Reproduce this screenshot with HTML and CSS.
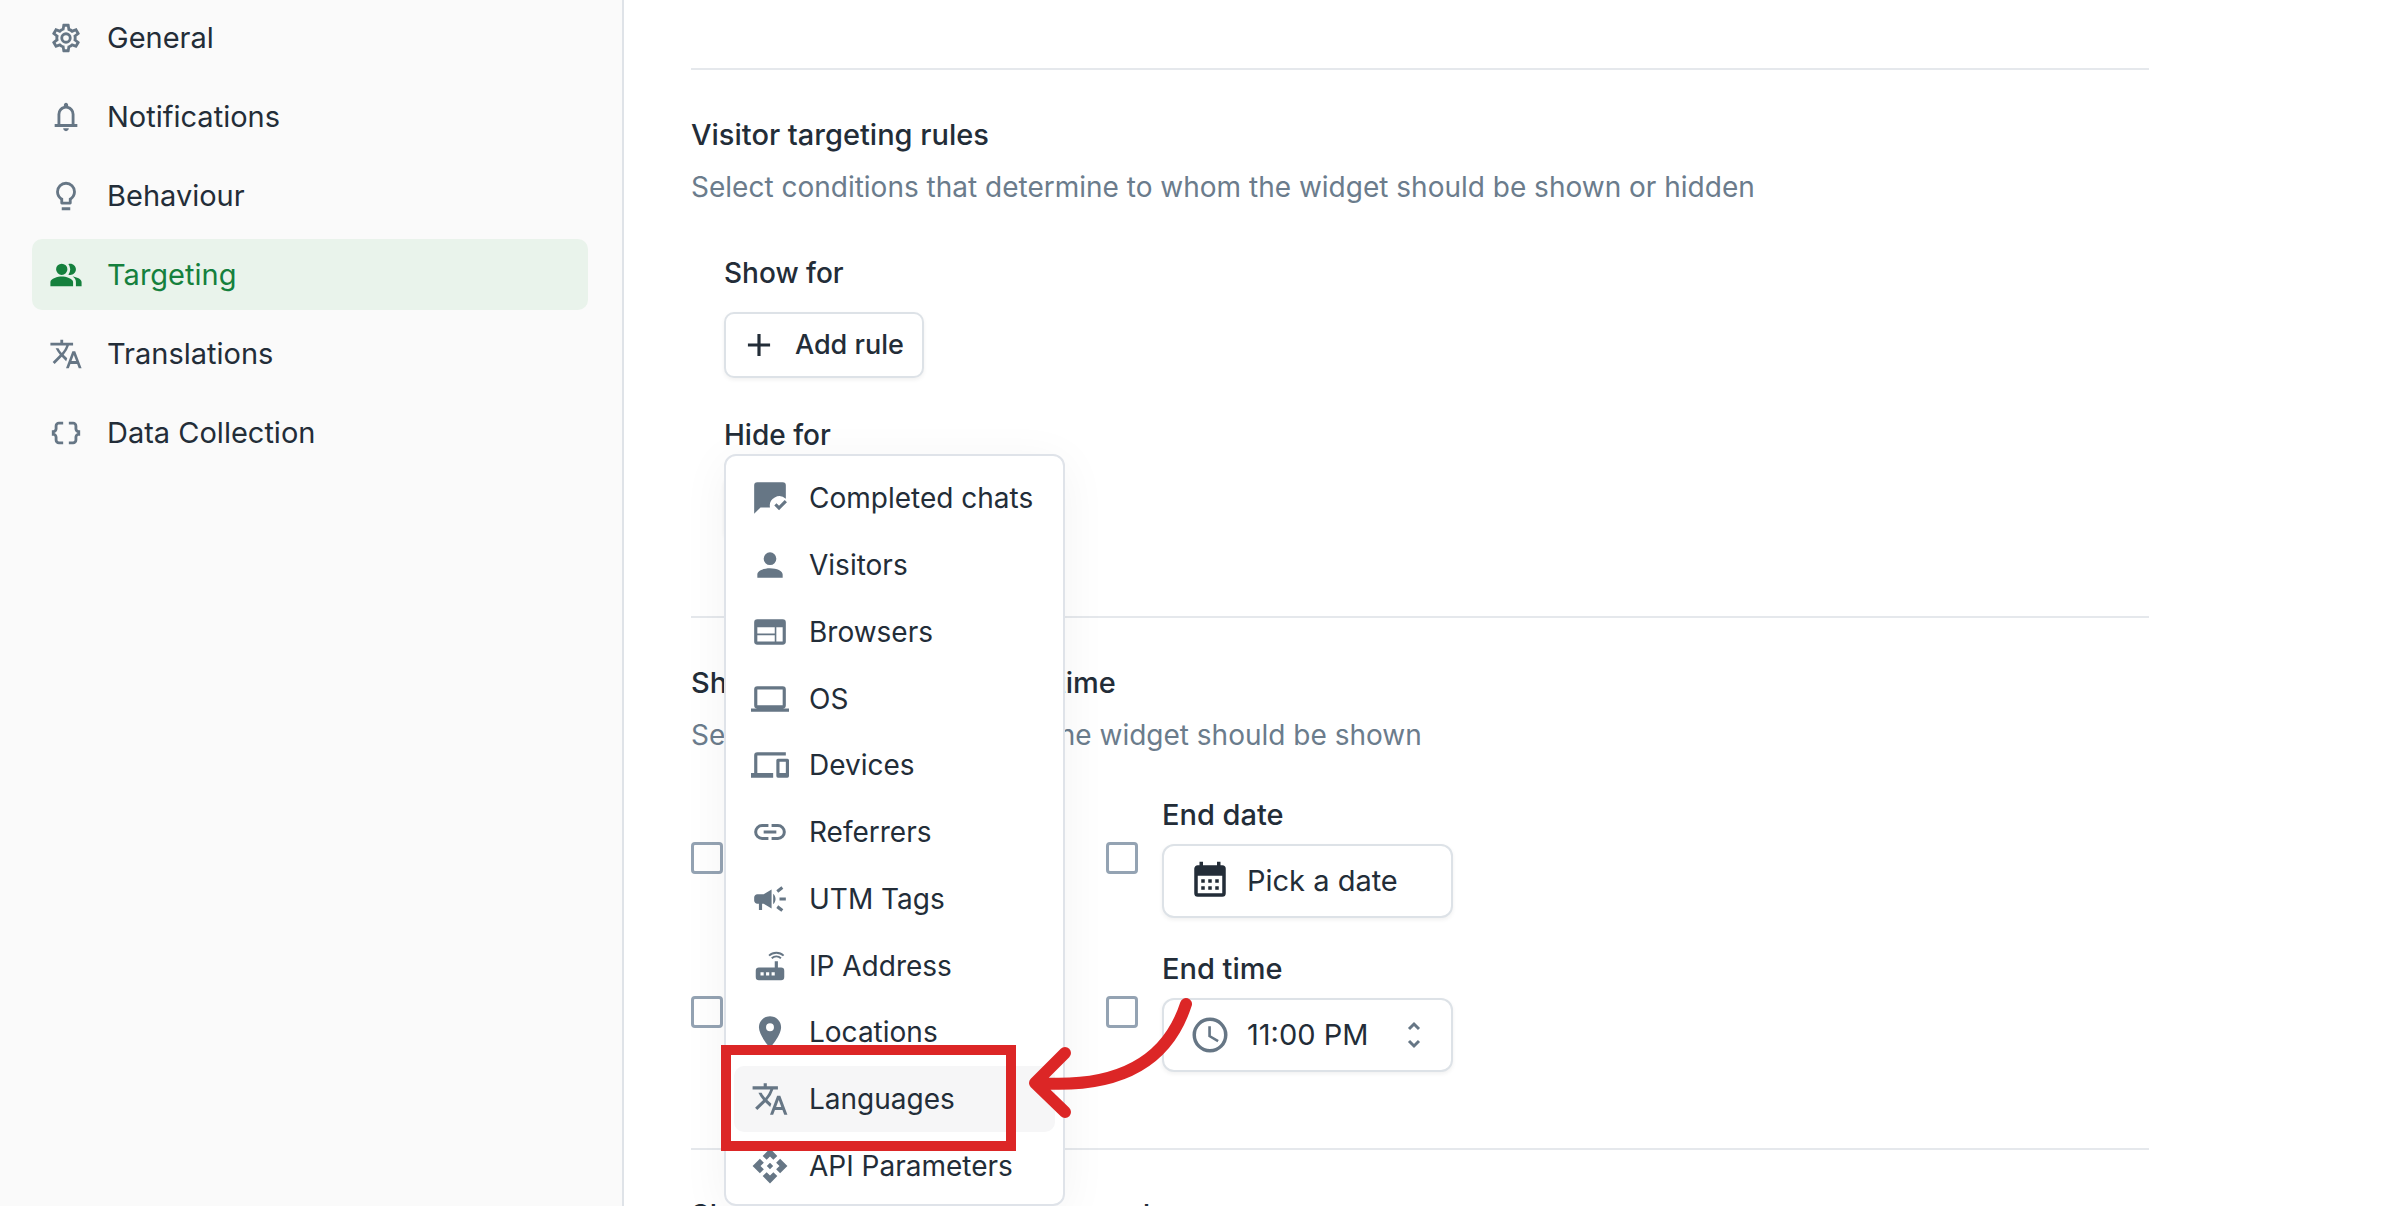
FILE: index.html
```html
<!DOCTYPE html>
<html lang="en">
  <head>
    <meta charset="UTF-8" />
    <meta name="viewport" content="width=device-width, initial-scale=1.0" />
    <title>Widget targeting</title>
    <link rel="stylesheet" href="styles.css">
  </head>
  <body>
    <nav class="sidebar">
      <a href="#general"><svg class="icon" viewBox="0 0 24 24"><path d="M12 8a4 4 0 0 1 4 4 4 4 0 0 1-4 4 4 4 0 0 1-4-4 4 4 0 0 1 4-4m0 2a2 2 0 0 0-2 2 2 2 0 0 0 2 2 2 2 0 0 0 2-2 2 2 0 0 0-2-2m-2 12c-.25 0-.46-.18-.5-.42l-.37-2.65c-.63-.25-1.17-.59-1.69-.99l-2.49 1.01c-.22.08-.49 0-.61-.22l-2-3.46a.493.493 0 0 1 .12-.64l2.11-1.66L4.5 12l.07-1-2.11-1.63a.493.493 0 0 1-.12-.64l2-3.46c.12-.22.39-.31.61-.22l2.49 1c.52-.39 1.06-.73 1.69-.98l.37-2.65c.04-.24.25-.42.5-.42h4c.25 0 .46.18.5.42l.37 2.65c.63.25 1.17.59 1.69.98l2.49-1c.22-.09.49 0 .61.22l2 3.46c.13.22.07.49-.12.64L19.43 11l.07 1-.07 1 2.11 1.63c.19.15.25.42.12.64l-2 3.46c-.12.22-.39.31-.61.22l-2.49-1c-.52.39-1.06.73-1.69.98l-.37 2.65c-.04.24-.25.42-.5.42h-4m1.25-18-.37 2.61c-1.2.25-2.26.89-3.03 1.78L5.44 7.35l-.75 1.3L6.8 10.2a5.55 5.55 0 0 0 0 3.6l-2.12 1.56.75 1.3 2.43-1.04c.77.88 1.82 1.52 3.01 1.76l.37 2.62h1.52l.37-2.61c1.19-.25 2.24-.89 3.01-1.77l2.43 1.04.75-1.3-2.12-1.55c.4-1.17.4-2.44 0-3.61l2.11-1.55-.75-1.3-2.41 1.04a5.42 5.42 0 0 0-3.03-1.77L12.75 4h-1.5Z"/></svg>General</a>
      <a href="#notifications"><svg class="icon" viewBox="0 -960 960 960"><path d="M160-200v-80h80v-280q0-83 50-147.500T420-792v-28q0-25 17.500-42.500T480-880t42.500 17.500T540-820v28q80 20 130 84.500T720-560v280h80v80H160Zm320 120q-33 0-56.500-23.500T400-160h160q0 33-23.500 56.500T480-80ZM320-280h320v-280q0-66-47-113t-113-47q-66 0-113 47t-47 113v280Z"/></svg>Notifications</a>
      <a href="#behaviour"><svg class="icon" viewBox="0 0 24 24"><path d="M12 2a7 7 0 0 1 7 7c0 2.380-1.190 4.470-3 5.740V17a1 1 0 0 1-1 1H9a1 1 0 0 1-1-1v-2.260C6.190 13.470 5 11.380 5 9a7 7 0 0 1 7-7M9 22v-2h6v2H9m3-18a5 5 0 0 0-5 5c0 2.050 1.230 3.810 3 4.580V16h4v-2.420c1.770-.77 3-2.530 3-4.580a5 5 0 0 0-5-5Z"/></svg>Behaviour</a>
      <a href="#targeting" class="active"><svg class="icon" viewBox="0 0 24 24"><path d="M16.670 13.130C18.040 14.060 19 15.320 19 17v3h4v-3c0-2.180-3.570-3.470-6.330-3.870ZM15 12c2.210 0 4-1.790 4-4s-1.790-4-4-4c-.47 0-.91.1-1.330.24a5.980 5.980 0 0 1 0 7.520c.42.14.86.24 1.330.24ZM9 4a4 4 0 1 1 0 8 4 4 0 0 1 0-8m0 9c-2.670 0-8 1.340-8 4v3h16v-3c0-2.660-5.330-4-8-4Z"/></svg>Targeting</a>
      <a href="#translations"><svg class="icon" viewBox="0 0 24 24"><path d="m12.870 15.070-2.540-2.510.03-.03A17.520 17.520 0 0 0 14.070 6H17V4h-7V2H8v2H1v2h11.170C11.500 7.920 10.440 9.750 9 11.350 8.070 10.320 7.300 9.190 6.690 8h-2c.73 1.630 1.730 3.170 2.980 4.560l-5.090 5.020L4 19l5-5 3.110 3.110.76-2.040M18.500 10h-2L12 22h2l1.120-3h4.750L21 22h2l-4.500-12m-2.620 7 1.620-4.330L19.120 17h-3.240Z"/></svg>Translations</a>
      <a href="#data"><svg class="icon" viewBox="0 0 24 24"><path d="M4 7v2c0 .55-.45 1-1 1H2v4h1c.55 0 1 .45 1 1v2c0 1.650 1.350 3 3 3h3v-2H7c-.55 0-1-.45-1-1v-2c0-1.300-.84-2.420-2-2.830v-.34C5.160 11.420 6 10.300 6 9V7c0-.55.45-1 1-1h3V4H7C5.350 4 4 5.350 4 7m17 3c-.55 0-1-.45-1-1V7c0-1.650-1.350-3-3-3h-3v2h3c.55 0 1 .45 1 1v2c0 1.300.84 2.420 2 2.830v.34c-1.160.41-2 1.520-2 2.830v2c0 .55-.45 1-1 1h-3v2h3c1.650 0 3-1.350 3-3v-2c0-.55.45-1 1-1h1v-4h-1Z"/></svg>Data Collection</a>
    </nav>

    <main>
      <section>
        <h2>Visitor targeting rules</h2>
        <p>Select conditions that determine to whom the widget should be shown or hidden</p>
        <div class="rules">
          <h3>Show for</h3>
          <button class="add-rule" type="button"><svg class="icon" viewBox="0 0 24 24"><path d="M19 13h-6v6h-2v-6H5v-2h6V5h2v6h6v2Z"/></svg>Add rule</button>
          <h3>Hide for</h3>
          <div class="dropdown">
            <button class="add-rule" type="button"><svg class="icon" viewBox="0 0 24 24"><path d="M19 13h-6v6h-2v-6H5v-2h6V5h2v6h6v2Z"/></svg>Add rule</button>
            <div class="menu">
              <button type="button"><svg class="icon" viewBox="0 0 24 24"><path d="M4 2a2 2 0 0 0-2 2v18l4-4h6a6 6 0 0 1 10-5.500V4a2 2 0 0 0-2-2H4m17.300 11.300-3.600 3.600-1.600-1.600-1.400 1.400 3 3 5-5-1.400-1.400Z"/></svg>Completed chats</button>
              <button type="button"><svg class="icon" viewBox="0 0 24 24"><path d="M12 4a4 4 0 1 1 0 8 4 4 0 0 1 0-8m0 10c4.420 0 8 1.790 8 4v2H4v-2c0-2.210 3.580-4 8-4Z"/></svg>Visitors</button>
              <button type="button"><svg class="icon" viewBox="0 0 24 24"><path d="M20 4H4a2 2 0 0 0-2 2v12a2 2 0 0 0 2 2h16a2 2 0 0 0 2-2V6a2 2 0 0 0-2-2m-5 14H4v-4h11v4m0-5H4V9h11v4m5 5h-4V9h4v9Z"/></svg>Browsers</button>
              <button type="button"><svg class="icon" viewBox="0 0 24 24"><path d="M4 6h16v10H4m16 2a2 2 0 0 0 2-2V6a2 2 0 0 0-2-2H4a2 2 0 0 0-2 2v10a2 2 0 0 0 2 2H0v2h24v-2h-4Z"/></svg>OS</button>
              <button type="button"><svg class="icon" viewBox="0 0 24 24"><path d="M4 6h18V4H4a2 2 0 0 0-2 2v11H0v3h14v-3H4V6m19 2h-6a1 1 0 0 0-1 1v10a1 1 0 0 0 1 1h6a1 1 0 0 0 1-1V9a1 1 0 0 0-1-1m-1 9h-4v-7h4v7Z"/></svg>Devices</button>
              <button type="button"><svg class="icon" viewBox="0 0 24 24"><path d="M3.900 12A3.100 3.100 0 0 1 7 8.900h4V7H7a5 5 0 0 0 0 10h4v-1.900H7A3.100 3.100 0 0 1 3.900 12M8 13h8v-2H8v2m9-6h-4v1.900h4a3.100 3.100 0 0 1 0 6.200h-4V17h4a5 5 0 0 0 0-10Z"/></svg>Referrers</button>
              <button type="button"><svg class="icon" viewBox="0 0 24 24"><path d="M18 11v2h4v-2h-4m-2 6.610c.96.71 2.210 1.650 3.200 2.390l1.200-1.600c-.99-.74-2.240-1.680-3.200-2.400L16 17.610M20.400 5.600 19.200 4c-.99.740-2.240 1.680-3.200 2.400L17.200 8c.96-.72 2.210-1.650 3.200-2.400M4 9c-1.100 0-2 .9-2 2v2c0 1.100.9 2 2 2h1v4h2v-4h1l5 3V6L8 9H4m11.500 3c0-1.330-.58-2.530-1.500-3.350v6.690c.92-.81 1.500-2.010 1.500-3.340Z"/></svg>UTM Tags</button>
              <button type="button"><svg class="icon" viewBox="0 0 24 24"><path d="M19 13h-2V9h-2v4H5a2 2 0 0 0-2 2v4a2 2 0 0 0 2 2h14a2 2 0 0 0 2-2v-4a2 2 0 0 0-2-2M8 18H6v-2h2v2m3.500 0h-2v-2h2v2m3.500 0h-2v-2h2v2M20.200 5.900l.8-.8A7 7 0 0 0 16 3a7 7 0 0 0-5 2.100l.8.8A6 6 0 0 1 16 4.200a6 6 0 0 1 4.200 1.700m-.9.800A4.700 4.700 0 0 0 16 5.300a4.700 4.700 0 0 0-3.300 1.400l.8.800a3.600 3.600 0 0 1 5 0l.8-.8Z"/></svg>IP Address</button>
              <button type="button"><svg class="icon" viewBox="0 0 24 24"><path d="M12 11.500A2.500 2.500 0 1 1 12 6.500a2.500 2.500 0 0 1 0 5M12 2a7 7 0 0 0-7 7c0 5.250 7 13 7 13s7-7.750 7-13a7 7 0 0 0-7-7Z"/></svg>Locations</button>
              <button type="button" class="selected"><svg class="icon" viewBox="0 0 24 24"><path d="m12.870 15.070-2.540-2.510.03-.03A17.520 17.520 0 0 0 14.070 6H17V4h-7V2H8v2H1v2h11.170C11.500 7.920 10.440 9.750 9 11.350 8.070 10.320 7.300 9.190 6.690 8h-2c.73 1.630 1.730 3.170 2.980 4.560l-5.090 5.020L4 19l5-5 3.110 3.110.76-2.040M18.500 10h-2L12 22h2l1.120-3h4.750L21 22h2l-4.500-12m-2.620 7 1.620-4.330L19.120 17h-3.240Z"/></svg>Languages</button>
              <button type="button"><svg class="icon" viewBox="0 0 24 24"><path d="m14 12-2 2-2-2 2-2 2 2m-2-6 2.120 2.120 2.500-2.500L12 1 7.380 5.620l2.500 2.500L12 6m-6 6 2.120-2.120-2.500-2.500L1 12l4.620 4.620 2.500-2.500L6 12m12 0-2.120 2.120 2.500 2.500L23 12l-4.620-4.620-2.500 2.500L18 12m-6 6-2.120-2.120-2.500 2.500L12 23l4.620-4.620-2.500-2.500L12 18Z"/></svg>API Parameters</button>
            </div>
            <!-- callout drawn over the menu -->
            <div class="highlight"></div>
            <svg class="arrow" viewBox="0 0 170 130"><path d="M161 13C142 72 92 98 12 92M40 62 10 92l30 29"/></svg>
          </div>
        </div>
      </section>

      <section>
        <h2>Show at specific date and time</h2>
        <p>Select date and time when the widget should be shown</p>
        <div class="schedule">
          <div class="field">
            <input type="checkbox" id="startDateOn" aria-label="Use start date">
            <label for="startDate">Start date</label>
            <button class="picker" type="button" id="startDate">Pick a date</button>
          </div>
          <div class="field">
            <input type="checkbox" id="endDateOn" aria-label="Use end date">
            <label for="endDate">End date</label>
            <button class="picker" type="button" id="endDate"><svg class="icon dark" viewBox="0 0 24 24"><path d="M7 11h2v2H7v-2m14-6v14a2 2 0 0 1-2 2H5a2 2 0 0 1-2-2V5c0-1.110.9-2 2-2h1V1h2v2h8V1h2v2h1a2 2 0 0 1 2 2M5 19h14V9H5v10m10-6v-2h2v2h-2m-4 0v-2h2v2h-2m-4 4v-2h2v2H7m8 0v-2h2v2h-2m-4 0v-2h2v2h-2Z"/></svg>Pick a date</button>
          </div>
          <div class="field">
            <input type="checkbox" id="startTimeOn" aria-label="Use start time">
            <label for="startTime">Start time</label>
            <button class="picker" type="button" id="startTime">9:00 AM</button>
          </div>
          <div class="field">
            <input type="checkbox" id="endTimeOn" aria-label="Use end time">
            <label for="endTime">End time</label>
            <div class="picker">
              <svg class="icon" viewBox="0 0 24 24"><path d="M12 20a8 8 0 1 0 0-16 8 8 0 0 0 0 16m0-18a10 10 0 1 1 0 20 10 10 0 0 1 0-20m.5 5v5.250l4.500 2.670-.75 1.230L11 13V7h1.500Z"/></svg>
              <select id="endTime"><option>11:00 PM</option></select>
              <svg class="icon chevrons" viewBox="0 0 24 30"><path d="m7 9 5-5 5 5M7 21l5 5 5-5"/></svg>
            </div>
          </div>
        </div>
      </section>

      <section>
        <h2>Show it after a number of seconds</h2>
      </section>
    </main>
  </body>
</html>
```
FILE: styles.css
```css
* {
  box-sizing: border-box;
}
body {
  margin: 0;
  height: 100vh;
  overflow: hidden;
  display: flex;
  font-family: Inter, sans-serif;
  font-size: 28px;
  line-height: 40px;
  color: #232d38;
  background-color: #fff;
}
button,
select {
  font: inherit;
  color: inherit;
}
.icon {
  width: 38px;
  height: 38px;
  flex: none;
  fill: #667685;
}
.sidebar {
  flex: 0 0 624px;
  padding: 2px 34px 0 32px;
  display: flex;
  flex-direction: column;
  gap: 8px;
  background-color: #fafafa;
  border-right: 2px solid #dfe3e8;
}
.sidebar a {
  display: flex;
  align-items: center;
  gap: 24px;
  height: 71px;
  padding: 0 17px;
  border-radius: 10px;
  font-size: 29px;
  color: inherit;
  text-decoration: none;
}
.sidebar .icon {
  width: 34px;
  height: 34px;
}
.sidebar .active {
  color: #15803d;
  background-color: #e9f3eb;
}
.active .icon {
  fill: #15803d;
}
main {
  flex: 1;
  max-width: 1525px;
  padding: 68px 0 0 67px;
}
section {
  border-top: 2px solid #e5e8ec;
  padding-top: 45px;
}
h2,
h3,
p {
  margin: 0;
  font-size: 28px;
}
h2,
h3 {
  font-weight: 500;
}
h2 {
  font-size: 29px;
}
p {
  margin-top: 12px;
  color: #6b7c8c;
}
.rules {
  padding: 46px 33px 76px;
}
.add-rule {
  display: flex;
  align-items: center;
  gap: 17px;
  height: 66px;
  margin: 19px 0 37px;
  padding: 0 18px 0 14px;
  border: 2px solid #dde2e7;
  border-radius: 10px;
  background-color: #fff;
  box-shadow: 0 2px 4px rgba(0, 0, 0, 0.06);
  font-size: 27px;
  font-weight: 500;
}
.add-rule .icon {
  fill: #232d38;
}
.dropdown {
  position: relative;
}
.dropdown .add-rule {
  margin-bottom: 0;
}
.menu {
  position: absolute;
  top: -20px;
  left: 0;
  z-index: 1;
  display: flex;
  flex-direction: column;
  width: 341px;
  height: 752px;
  padding: 9px 8px 5px;
  border: 2px solid #dfe3e9;
  border-radius: 12px;
  background-color: #fff;
  box-shadow: 0 8px 48px rgba(0, 0, 0, 0.05);
}
.menu button {
  flex: 1;
  display: flex;
  align-items: center;
  gap: 20px;
  padding: 0 17px;
  border: 0;
  border-radius: 10px;
  background: none;
  white-space: nowrap;
}
.menu .selected {
  background-color: #f6f6f7;
}
.highlight {
  position: absolute;
  top: 571px;
  left: -3px;
  z-index: 2;
  width: 295px;
  height: 106px;
  border: 10px solid #dc2626;
}
.arrow {
  position: absolute;
  top: 517px;
  left: 301px;
  z-index: 2;
  width: 170px;
  height: 130px;
  fill: none;
  stroke: #dc2626;
  stroke-width: 12px;
  stroke-linecap: round;
  stroke-linejoin: round;
}
.schedule {
  display: grid;
  grid-template-columns: 348px 348px;
  gap: 31px 67px;
  padding: 40px 0 76px;
}
.field {
  display: grid;
  grid-template-columns: 32px 291px;
  column-gap: 24px;
  row-gap: 9px;
  font-size: 29px;
}
.field label {
  grid-column: 2;
  grid-row: 1;
  font-weight: 500;
}
.field input {
  grid-row: 2;
  appearance: none;
  width: 32px;
  height: 32px;
  margin: -2px 0 0;
  border: 3px solid #94a3b3;
  border-radius: 4px;
  background-color: #fff;
}
.picker {
  grid-column: 2;
  grid-row: 2;
  display: flex;
  align-items: center;
  gap: 16px;
  height: 74px;
  padding: 0 25px;
  border: 2px solid #dde2e7;
  border-radius: 12px;
  background-color: #fff;
  box-shadow: 0 2px 4px rgba(0, 0, 0, 0.06);
}
.picker .icon {
  width: 42px;
  height: 42px;
}
.picker .dark {
  fill: #232d38;
}
.picker select {
  flex: 1;
  appearance: none;
  border: 0;
  padding: 0;
  background: none;
}
.picker .chevrons {
  width: 24px;
  height: 30px;
  fill: none;
  stroke: #667685;
  stroke-width: 3px;
}
```
